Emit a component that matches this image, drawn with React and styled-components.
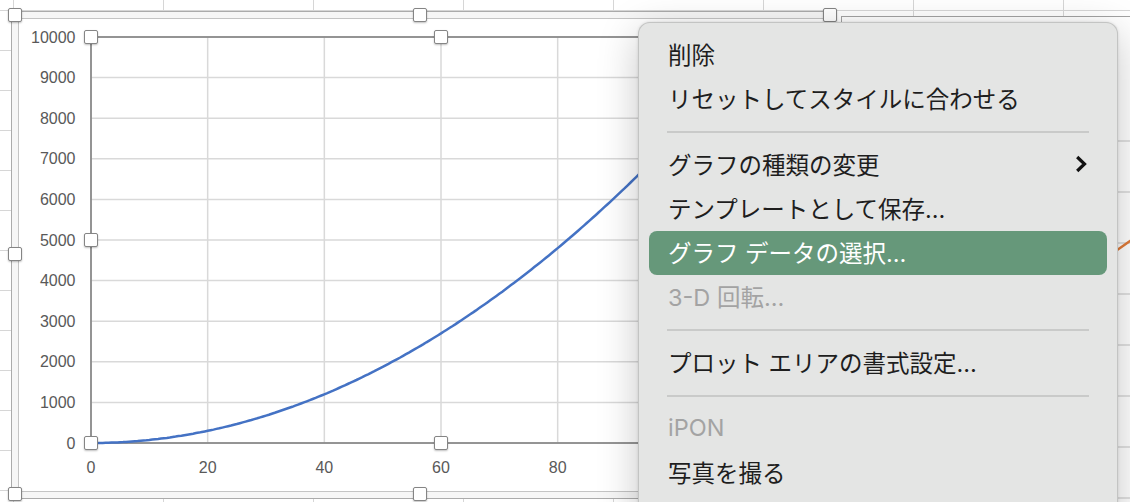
import React from 'react'
import styled, {createGlobalStyle, css} from 'styled-components'

const GlobalStyle = createGlobalStyle`
body{
margin:0;
background:#fff;
font-family:"Liberation Sans", Arial, sans-serif;
}
`

const Sheet = styled.div`
position:relative;
width:1130px;
height:502px;
overflow:hidden;
background-color:#fff;
background-image:
    linear-gradient(to right, #d6d6d6 1px, transparent 1px),
    linear-gradient(to bottom, #d6d6d6 1px, transparent 1px);
background-size:150px 40px;
background-position:13px 10px;
`

const ChartFrame = styled.div`
position:absolute;
left:11px;
top:11px;
width:823px;
height:488px;
box-sizing:border-box;
border:1px solid #ababab;
background:#f6f6f6;
padding:6px;
display:flex;
`

const ChartArea = styled.div`
flex:1;
border:1px solid #c4c4c4;
background:#fff;
`

const OtherChart = styled.div`
position:absolute;
left:841px;
top:16px;
width:420px;
height:520px;
box-sizing:border-box;
border:1px solid #a3a3a3;
background:#fff;
`

const Handle = styled.div`
position:absolute;
width:14px;
height:14px;
box-sizing:border-box;
background:#fff;
border:1px solid #858585;
border-radius:2px;
box-shadow:0 1px 2px rgba(0,0,0,0.25);
transform:translate(-50%, -50%);
`

const Menu = styled.div`
position:absolute;
left:638px;
top:22px;
width:480px;
height:520px;
box-sizing:border-box;
padding:10px;
background:#e4e5e4;
border:1px solid rgba(0,0,0,0.14);
border-radius:12px;
box-shadow:0 10px 40px rgba(0,0,0,0.22), 0 0 3px rgba(0,0,0,0.12);
font-family:"Inter", "Noto Sans CJK JP", sans-serif;
`

const Item = styled.div`
height:44px;
box-sizing:border-box;
display:flex;
align-items:center;
justify-content:space-between;
padding:0 20px 3px 19px;
border-radius:8px;
font-size:23.5px;
color:#1e1e1e;
white-space:nowrap;
${props => props.disabled && css`
color:#a3a3a3;
`}
${props => props.active && css`
background:#66987a;
color:#fff;
`}
`

const Separator = styled.div`
height:22px;
margin:0 18px;
display:flex;
align-items:center;
&::after{
content:'';
flex:1;
height:2px;
background:#c9cac9;
}
`

const AXIS = '#7b7b7b'
const GRID = '#d9d9d9'
const LABEL = '#595959'

const X0 = 91, X1 = 791, Y0 = 443, Y1 = 37
const px = t => X0 + t * (X1 - X0) / 120
const py = v => Y0 - v * (Y0 - Y1) / 10000

function curvePath(){
    let pts = []
    for(let t = 0; t <= 115.4; t += 0.5){
        pts.push(`${px(t).toFixed(1)},${py(0.75 * t * t).toFixed(1)}`)
    }
    return 'M' + pts.join(' L')
}

function PlotChart(){
    let yTicks = []
    for(let v = 0; v <= 10000; v += 1000) yTicks.push(v)
    let xTicks = [0, 20, 40, 60, 80, 100, 120]
    // labels past 80 sit under the context menu
    let xLabels = [0, 20, 40, 60, 80]
    return(
        <svg width="807" height="472" viewBox="19 19 807 472" style={{display:'block'}}>
            {yTicks.map(v =>
                <line key={'h' + v} x1={X0} x2={X1} y1={py(v)} y2={py(v)} stroke={GRID} strokeWidth="1.5"/>
            )}
            {xTicks.map(t =>
                <line key={'v' + t} x1={px(t)} x2={px(t)} y1={Y1} y2={Y0} stroke={GRID} strokeWidth="1.5"/>
            )}
            <rect x={X0} y={Y1} width={X1 - X0} height={Y0 - Y1} fill="none" stroke={AXIS} strokeWidth="1.5"/>
            {yTicks.map(v =>
                <text key={'yl' + v} x="75.5" y={py(v) + 5.5} textAnchor="end"
                    fontSize="16" fill={LABEL} fontFamily="'Liberation Sans', Arial, sans-serif">{v}</text>
            )}
            {xLabels.map(t =>
                <text key={'xl' + t} x={px(t)} y="473" textAnchor="middle"
                    fontSize="16" fill={LABEL} fontFamily="'Liberation Sans', Arial, sans-serif">{t}</text>
            )}
            <path d={curvePath()} fill="none" stroke="#4472c4" strokeWidth="2.5"/>
        </svg>
    )
}

function OtherPlot(){
    let rows = [140, 191, 242, 293, 344, 395, 446, 497]
    return(
        <svg width="420" height="520" viewBox="841 16 420 520" style={{display:'block'}}>
            {rows.map(y =>
                <line key={y} x1="841" x2="1261" y1={y} y2={y} stroke={GRID} strokeWidth="1.5"/>
            )}
            <path d="M1050,290 Q1100,262 1140,232" fill="none" stroke="#e07b39" strokeWidth="2.5"/>
        </svg>
    )
}

function Chevron(){
    return(
        <svg width="12" height="18" viewBox="0 0 12 18">
            <path d="M2.2 2 L9.5 9 L2.2 16" fill="none" stroke="#111" strokeWidth="3.2"/>
        </svg>
    )
}

const menuItems = [
    {label:'削除'},
    {label:'リセットしてスタイルに合わせる'},
    {sep:true},
    {label:'グラフの種類の変更', submenu:true},
    {label:'テンプレートとして保存…'},
    {label:'グラフ データの選択…', active:true},
    {label:'3-D 回転…', disabled:true},
    {sep:true},
    {label:'プロット エリアの書式設定…'},
    {sep:true},
    {label:'iPON', disabled:true},
    {label:'写真を撮る'},
]

const chartHandles = [
    [15, 15], [420, 15], [830, 15],
    [15, 254], [15, 494], [420, 494],
]
const plotHandles = [
    [91, 37], [441, 37], [91, 240], [91, 443], [441, 443],
]

function ContextMenu(){
    return(
        <Menu>
            {menuItems.map((item, i) => item.sep
                ? <Separator key={i}/>
                : <Item key={i} active={item.active} disabled={item.disabled}>
                    <span>{item.label}</span>
                    {item.submenu && <Chevron/>}
                </Item>
            )}
        </Menu>
    )
}

export default function App(){
    return(
        <>
            <GlobalStyle/>
            <Sheet>
                <OtherChart>
                    <OtherPlot/>
                </OtherChart>
                <ChartFrame>
                    <ChartArea>
                        <PlotChart/>
                    </ChartArea>
                </ChartFrame>
                {chartHandles.concat(plotHandles).map(([x, y]) =>
                    <Handle key={x + '-' + y} style={{left:x, top:y}}/>
                )}
                <ContextMenu/>
            </Sheet>
        </>
    )
}
